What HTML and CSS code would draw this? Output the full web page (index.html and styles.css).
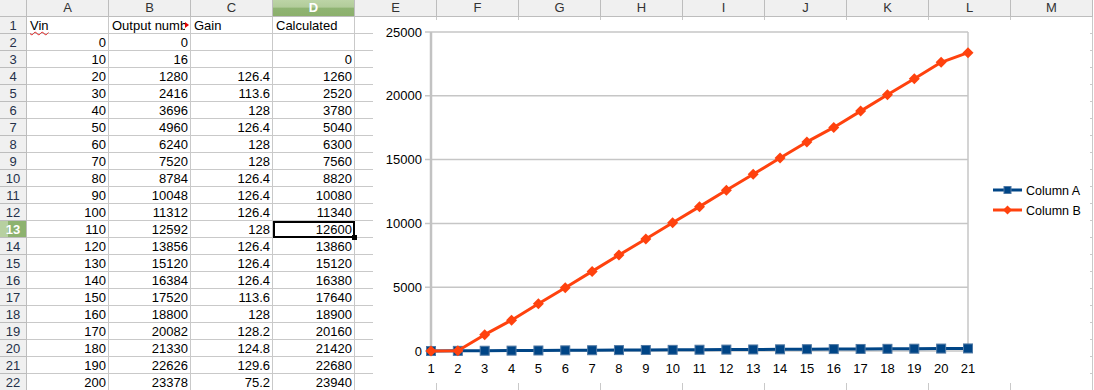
FILE: index.html
```html
<!DOCTYPE html>
<html lang="en">
<head>
    <meta charset="UTF-8">
    <title>Gain sheet</title>
    <link rel="stylesheet" href="styles.css">
</head>
<body>
    <div class="page">
        <div class="sheet" id="sheet"></div>

        <!-- chart sits on top of columns E..M -->
        <svg class="chart" id="chart" viewBox="373 20 717 363" xmlns="http://www.w3.org/2000/svg"></svg>
    </div>

    <script>
        var cols = "ABCDEFGHIJKLM".split("");
        var data = [
            ["Vin", "Output number", "Gain", "Calculated"],
            [0, 0, "", ""],
            [10, 16, "", 0],
            [20, 1280, 126.4, 1260],
            [30, 2416, 113.6, 2520],
            [40, 3696, 128, 3780],
            [50, 4960, 126.4, 5040],
            [60, 6240, 128, 6300],
            [70, 7520, 128, 7560],
            [80, 8784, 126.4, 8820],
            [90, 10048, 126.4, 10080],
            [100, 11312, 126.4, 11340],
            [110, 12592, 128, 12600],
            [120, 13856, 126.4, 13860],
            [130, 15120, 126.4, 15120],
            [140, 16384, 126.4, 16380],
            [150, 17520, 113.6, 17640],
            [160, 18800, 128, 18900],
            [170, 20082, 128.2, 20160],
            [180, 21330, 124.8, 21420],
            [190, 22626, 129.6, 22680],
            [200, 23378, 75.2, 23940]
        ];

        var sheet = document.getElementById('sheet');

        function cell(cls, text) {
            var d = document.createElement('div');
            d.className = cls;
            d.textContent = text;
            sheet.appendChild(d);
            return d;
        }

        cell('corner', '');
        cols.forEach(function (c) {
            cell(c === 'D' ? 'col-head active' : 'col-head', c);
        });

        for (var r = 0; r < data.length; r++) {
            cell(r === 12 ? 'row-head active' : 'row-head', r + 1);
            for (var c = 0; c < cols.length; c++) {
                var v = c < 4 ? data[r][c] : "";
                var cls = typeof v === 'number' ? 'cell num' : 'cell';
                if (r === 0 && c === 0) cls += ' spell';
                if (r === 0 && c === 1) cls += ' overflow';
                if (r === 12 && c === 3) cls += ' selected';
                var d = cell(cls, '');
                var span = document.createElement('span');
                span.textContent = v;
                d.appendChild(span);
            }
        }

        // chart
        var ns = "http://www.w3.org/2000/svg";
        var chart = document.getElementById('chart');
        var X0 = 431, X1 = 968, Y0 = 351, YT = 32;

        function el(name, attrs, text) {
            var e = document.createElementNS(ns, name);
            for (var k in attrs) e.setAttribute(k, attrs[k]);
            if (text !== undefined) e.textContent = text;
            chart.appendChild(e);
            return e;
        }
        function px(i) { return X0 + i * (X1 - X0) / 20; }
        function py(v) { return Y0 - v / 25000 * (Y0 - YT); }

        el('rect', { x: 373, y: 20, width: 717, height: 363, 'class': 'chart-bg' });

        for (var k = 0; k <= 5; k++) {
            var y = py(k * 5000);
            el('line', { x1: 425, y1: y, x2: X1, y2: y, 'class': 'grid' });
            el('text', { x: 422, y: y + 4.5, 'class': 'ylabel' }, k * 5000);
        }
        el('line', { x1: X0, y1: YT, x2: X0, y2: Y0 + 1, 'class': 'axis' });
        el('line', { x1: X1, y1: YT, x2: X1, y2: Y0, 'class': 'grid' });

        for (var i = 0; i < 21; i++) {
            el('text', { x: px(i), y: 373, 'class': 'xlabel' }, i + 1);
        }

        function series(col, cls, marker) {
            var pts = [];
            for (var i = 0; i < 21; i++) pts.push(px(i) + ',' + py(data[i + 1][col]));
            el('polyline', { points: pts.join(' '), 'class': 'line ' + cls });
            for (var i = 0; i < 21; i++) marker(px(i), py(data[i + 1][col]));
        }
        function square(x, y) {
            el('rect', { x: x - 4.5, y: y - 4.5, width: 9, height: 9, 'class': 'mark-a' });
        }
        function diamond(x, y) {
            el('path', { d: 'M' + (x - 5.5) + ' ' + y + 'L' + x + ' ' + (y - 5.5) + 'L' + (x + 5.5) + ' ' + y + 'L' + x + ' ' + (y + 5.5) + 'Z', 'class': 'mark-b' });
        }

        series(0, 'line-a', square);
        series(1, 'line-b', diamond);

        // legend
        el('line', { x1: 993, y1: 190, x2: 1022, y2: 190, 'class': 'line line-a' });
        el('rect', { x: 1004, y: 186.5, width: 7, height: 7, 'class': 'mark-a' });
        el('text', { x: 1026, y: 194.5, 'class': 'legend' }, 'Column A');
        el('line', { x1: 993, y1: 210, x2: 1022, y2: 210, 'class': 'line line-b' });
        el('path', { d: 'M1003 210L1007.5 205.5L1012 210L1007.5 214.5Z', 'class': 'mark-b' });
        el('text', { x: 1026, y: 214.5, 'class': 'legend' }, 'Column B');
    </script>
</body>
</html>
```

FILE: styles.css
```css
* {
    box-sizing: border-box;
    margin: 0;
    padding: 0;
}

body {
    background: #fff;
    font-family: 'Liberation Sans', Arial, sans-serif;
    font-size: 13px;
    color: #000;
    overflow: hidden;
}

.page {
    position: relative;
    width: 1094px;
    height: 390px;
    overflow: hidden;
}

.sheet {
    display: grid;
    grid-template-columns: 27px repeat(13, 82px);
    grid-auto-rows: 17px;
}

.corner,
.col-head,
.row-head {
    background-color: #f0f0f0;
    border-right: 1px solid #bdbdbd;
    border-bottom: 1px solid #bdbdbd;
    color: #333;
    line-height: 16px;
    text-align: center;
}

.row-head {
    color: #25314a;
    line-height: 17px;
}

.col-head.active {
    background: linear-gradient(#bcd4a6 0%, #b2cc9a 45%, #8fb473 50%, #8cb06c 100%);
    color: #fff;
    font-weight: bold;
}

.row-head.active {
    background: linear-gradient(to right, #b7d0a0 0%, #b7d0a0 30%, #8db26f 32%, #8db26f 100%);
    color: #fff;
    font-weight: bold;
}

.cell {
    position: relative;
    border-right: 1px solid #c9c9c9;
    border-bottom: 1px solid #c9c9c9;
    line-height: 17px;
    padding: 0 2px 0 3px;
    white-space: nowrap;
    overflow: hidden;
}

.cell.num {
    text-align: right;
}

.spell {
    overflow: visible;
}

.spell span {
    text-decoration: underline wavy #e02020;
    text-decoration-thickness: 1px;
    text-underline-offset: 1px;
}

.overflow {
    padding-right: 5px;
}

.overflow span {
    display: block;
    overflow: hidden;
}

.overflow::after {
    content: "";
    position: absolute;
    right: 1px;
    top: 5px;
    border-left: 4px solid #e00000;
    border-top: 3.5px solid transparent;
    border-bottom: 3.5px solid transparent;
}

.selected {
    overflow: visible;
    outline: 2px solid #000;
    outline-offset: -2px;
    z-index: 2;
}

.selected::after {
    content: "";
    position: absolute;
    right: -3px;
    bottom: -3px;
    width: 5px;
    height: 5px;
    background: #000;
}

/* chart */
.chart {
    position: absolute;
    left: 373px;
    top: 20px;
    width: 717px;
    height: 363px;
    z-index: 3;
}

.chart-bg {
    fill: #fff;
}

.grid {
    stroke: #c6c6c6;
    stroke-width: 1.5;
}

.axis {
    stroke: #c2c2c2;
    stroke-width: 2.5;
}

.ylabel,
.xlabel,
.legend {
    font-family: 'Liberation Sans', Arial, sans-serif;
    font-size: 13px;
    fill: #000;
}

.ylabel {
    text-anchor: end;
}

.xlabel {
    text-anchor: middle;
}

.legend {
    font-size: 12.5px;
}

.line {
    fill: none;
    stroke-width: 3;
    stroke-linejoin: round;
}

.line-a {
    stroke: #004586;
}

.line-b {
    stroke: #ff420e;
}

.mark-a {
    fill: #004586;
    stroke: #4f79a5;
    stroke-width: 1;
}

.mark-b {
    fill: #ff420e;
}
```
